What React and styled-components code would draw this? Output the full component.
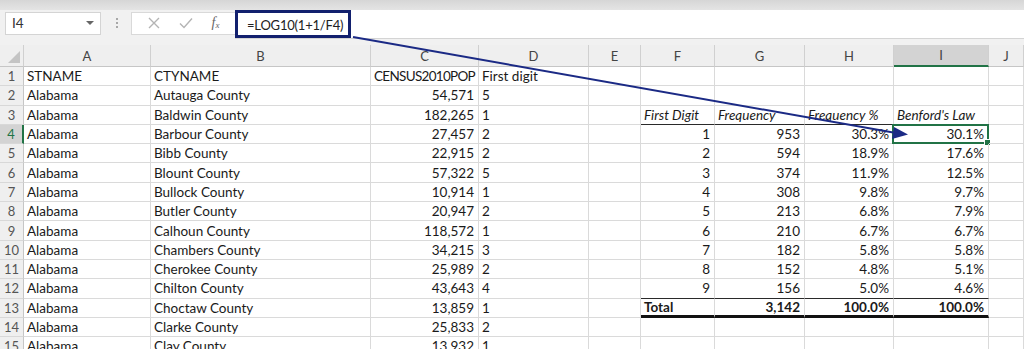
import React from 'react'
import styled, { createGlobalStyle } from 'styled-components'

const GlobalStyle = createGlobalStyle`
  html, body { margin: 0; padding: 0; background: #fff; }
  body { font-family: Lato, "Liberation Sans", sans-serif; overflow: hidden; }
`

const Page = styled.div`
  position: relative;
  width: 1024px;
  height: 349px;
  overflow: hidden;
  background: #fff;
`

const TopStrip = styled.div`
  height: 10px;
  background: linear-gradient(#d6d6d6, #e4e4e4);
`

const FormulaBar = styled.div`
  display: flex;
  align-items: center;
  height: 33px;
  padding-left: 5px;
  background: #f1f1f1;
`

const NameBox = styled.div`
  display: flex;
  align-items: center;
  justify-content: space-between;
  box-sizing: border-box;
  width: 96px;
  height: 23px;
  margin-top: -7px;
  padding: 0 6px 0 6px;
  background: #fff;
  border: 1px solid #d4d4d4;
  font-size: 13.5px;
  color: #333;
`

const Caret = styled.span`
  width: 0;
  height: 0;
  border-left: 4px solid transparent;
  border-right: 4px solid transparent;
  border-top: 4px solid #666;
`

const Dots = styled.div`
  display: flex;
  flex-direction: column;
  gap: 2px;
  margin: -7px 13px 0 15px;
  span {
    width: 2px;
    height: 2px;
    background: #a8a8a8;
  }
`

const IconBox = styled.div`
  display: flex;
  align-items: center;
  justify-content: space-around;
  box-sizing: border-box;
  width: 104px;
  height: 23px;
  margin-top: -7px;
  padding: 0 6px;
  background: #fff;
  border: 1px solid #d9d9d9;
  border-right: none;
`

const Fx = styled.span`
  font-family: "Liberation Serif", serif;
  font-style: italic;
  font-size: 14px;
  color: #666;
  sub { font-size: 9px; vertical-align: -1px; }
`

const FormulaInput = styled.div`
  flex: 1;
  display: flex;
  align-items: flex-start;
  height: 28px;
  margin-top: -5px;
  background: #fff;
  border-bottom: 1px solid #d4d4d4;
`

const Formula = styled.div`
  box-sizing: border-box;
  height: 28px;
  width: 116px;
  padding: 4px 0 0 9px;
  border: 3px solid #12206e;
  font-size: 13px;
  letter-spacing: -0.2px;
  white-space: nowrap;
  color: #222;
`

const Gap = styled.div`
  height: 2px;
  background: #f1f1f1;
`

const Sheet = styled.div`
  display: grid;
  grid-template-columns: 24px 127px 220px 108px 110px 52px 74px 90px 89px 95px 1fr;
  grid-template-rows: 22px;
  grid-auto-rows: 19.3px;
  font-size: 13.5px;
  color: #1a1a1a;
`

const ColHead = styled.div`
  display: flex;
  align-items: center;
  justify-content: center;
  box-sizing: border-box;
  background: ${p => (p.$active ? '#d3d3d3' : '#efefef')};
  border-right: 1px solid #d0d0d0;
  border-bottom: ${p => (p.$active ? '2px solid #217346' : '1px solid #c6c6c6')};
  color: #444;
  font-size: 13px;
`

const Corner = styled(ColHead)`
  position: relative;
  &::after {
    content: '';
    position: absolute;
    right: 3px;
    bottom: 3px;
    border-left: 12px solid transparent;
    border-bottom: 12px solid #c4c4c4;
  }
`

const RowHead = styled.div`
  display: flex;
  align-items: center;
  justify-content: center;
  box-sizing: border-box;
  background: ${p => (p.$active ? '#d3d3d3' : '#efefef')};
  border-right: ${p => (p.$active ? '2px solid #217346' : '1px solid #c6c6c6')};
  border-bottom: 1px solid #d8d8d8;
  color: ${p => (p.$active ? '#217346' : '#555')};
  font-size: 13px;
`

const Cell = styled.div`
  position: relative;
  display: flex;
  align-items: center;
  justify-content: ${p => (p.$right ? 'flex-end' : 'flex-start')};
  box-sizing: border-box;
  padding: 0 ${p => (p.$right ? '4px' : '2px')} 0 3px;
  border-right: 1px solid #dadada;
  border-bottom: ${p =>
    p.$under === 'thin' ? '1px solid #2a2a2a' : p.$under === 'thick' ? '3px solid #111' : '1px solid #dadada'};
  font-style: ${p => (p.$italic ? 'italic' : 'normal')};
  font-weight: ${p => (p.$bold ? 700 : 400)};
  letter-spacing: ${p => (p.$tight ? '-0.7px' : 'normal')};
  white-space: nowrap;
  overflow: visible;
`

const Selected = styled.div`
  position: absolute;
  inset: -1px -1px -1px -2px;
  border: 2px solid #217346;
  pointer-events: none;
  &::after {
    content: '';
    position: absolute;
    right: -4px;
    bottom: -4px;
    width: 5px;
    height: 5px;
    background: #217346;
    border: 1px solid #fff;
  }
`

const Arrow = styled.svg`
  position: absolute;
  left: 0;
  top: 0;
  pointer-events: none;
`

const columns = ['A', 'B', 'C', 'D', 'E', 'F', 'G', 'H', 'I', 'J']

const counties = [
  ['Autauga County', '54,571', '5'],
  ['Baldwin County', '182,265', '1'],
  ['Barbour County', '27,457', '2'],
  ['Bibb County', '22,915', '2'],
  ['Blount County', '57,322', '5'],
  ['Bullock County', '10,914', '1'],
  ['Butler County', '20,947', '2'],
  ['Calhoun County', '118,572', '1'],
  ['Chambers County', '34,215', '3'],
  ['Cherokee County', '25,989', '2'],
  ['Chilton County', '43,643', '4'],
  ['Choctaw County', '13,859', '1'],
  ['Clarke County', '25,833', '2'],
  ['Clay County', '13,932', '1'],
]

const benford = [
  ['1', '953', '30.3%', '30.1%'],
  ['2', '594', '18.9%', '17.6%'],
  ['3', '374', '11.9%', '12.5%'],
  ['4', '308', '9.8%', '9.7%'],
  ['5', '213', '6.8%', '7.9%'],
  ['6', '210', '6.7%', '6.7%'],
  ['7', '182', '5.8%', '5.8%'],
  ['8', '152', '4.8%', '5.1%'],
  ['9', '156', '5.0%', '4.6%'],
]

// cells F..I for a given row number
const tableCells = (row) => {
  if (row === 3) {
    return ['First Digit', 'Frequency', 'Frequency %', "Benford's Law"].map((t, i) => (
      <Cell key={i} $italic $under="thin">{t}</Cell>
    ))
  }
  if (row >= 4 && row <= 12) {
    const r = benford[row - 4]
    const under = row === 12 ? 'thin' : undefined
    return r.map((t, i) => (
      <Cell key={i} $right $under={under}>
        {t}
        {row === 4 && i === 3 && <Selected />}
      </Cell>
    ))
  }
  if (row === 13) {
    return ['Total', '3,142', '100.0%', '100.0%'].map((t, i) => (
      <Cell key={i} $bold $right={i > 0} $under="thick">{t}</Cell>
    ))
  }
  return [0, 1, 2, 3].map(i => <Cell key={i} />)
}

export default function App() {
  const rows = []
  for (let row = 1; row <= 15; row++) {
    const data = row === 1 ? ['STNAME', 'CTYNAME', 'CENSUS2010POP', 'First digit'] : ['Alabama', ...counties[row - 2]]
    rows.push(
      <React.Fragment key={row}>
        <RowHead $active={row === 4}>{row}</RowHead>
        <Cell>{data[0]}</Cell>
        <Cell>{data[1]}</Cell>
        <Cell $right={row > 1} $tight={row === 1}>{data[2]}</Cell>
        <Cell>{data[3]}</Cell>
        <Cell />
        {tableCells(row)}
        <Cell />
      </React.Fragment>
    )
  }

  return (
    <Page>
      <GlobalStyle />
      <TopStrip />
      <FormulaBar>
        <NameBox>
          <span>I4</span>
          <Caret />
        </NameBox>
        <Dots><span /><span /><span /></Dots>
        <IconBox>
          <svg width="12" height="12" viewBox="0 0 12 12">
            <path d="M1 1 L11 11 M11 1 L1 11" stroke="#b4b4b4" strokeWidth="1.4" fill="none" />
          </svg>
          <svg width="14" height="12" viewBox="0 0 14 12">
            <path d="M1 6.5 L5 10.5 L13 1.5" stroke="#b4b4b4" strokeWidth="1.4" fill="none" />
          </svg>
          <Fx>f<sub>x</sub></Fx>
        </IconBox>
        <FormulaInput>
          <Formula>=LOG10(1+1/F4)</Formula>
        </FormulaInput>
      </FormulaBar>
      <Gap />
      <Sheet>
        <Corner />
        {columns.map(c => (
          <ColHead key={c} $active={c === 'I'}>{c}</ColHead>
        ))}
        {rows}
      </Sheet>
      <Arrow width="1024" height="349" viewBox="0 0 1024 349">
        <line x1="353" y1="37" x2="896" y2="133" stroke="#1b2a85" strokeWidth="2" />
        <polygon points="908,134.5 894,127 892,139" fill="#1b2a85" />
      </Arrow>
    </Page>
  )
}
